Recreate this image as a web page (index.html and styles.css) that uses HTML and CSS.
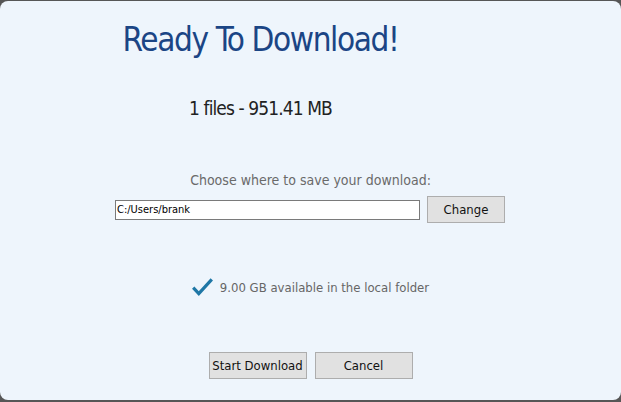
FILE: index.html
```html
<!DOCTYPE html>
<html>
<head>
<meta charset="utf-8">
<link rel="stylesheet" href="styles.css">
</head>
<body>
<div class="panel">
  <div class="header">
    <h1 class="title">Ready To Download!</h1>
    <div class="summary">1 files - 951.41 MB</div>
  </div>
  <div class="label">Choose where to save your download:</div>
  <div class="path-row">
    <input class="path" type="text" value="C:/Users/brank">
    <button class="btn change">Change</button>
  </div>
  <div class="space">
    <svg class="check" width="21" height="18" viewBox="0 0 21 18"><path d="M1.2 9.6 L6.8 15.6 L19.8 1.4" fill="none" stroke="#1f77a6" stroke-width="3.2" stroke-linecap="butt" stroke-linejoin="miter"/></svg>
    <span>9.00 GB available in the local folder</span>
  </div>
  <div class="actions">
    <button class="btn action">Start Download</button>
    <button class="btn action">Cancel</button>
  </div>
</div>
</body>
</html>
```
FILE: styles.css
```css
html, body {
  margin: 0;
  padding: 0;
  width: 621px;
  height: 402px;
  overflow: hidden;
  background: #565656;
}
body {
  padding-top: 1px;
  box-sizing: border-box;
  font-family: "DejaVu Sans Condensed", "DejaVu Sans", sans-serif;
}
.panel {
  height: 399px;
  background: #eef5fc;
  border-radius: 8px;
  display: flex;
  flex-direction: column;
  align-items: center;
}
.header {
  align-self: flex-start;
  width: 521px;
  text-align: center;
}
.title {
  margin: 19px 0 0;
  font-size: 33px;
  font-weight: normal;
  line-height: 40px;
  letter-spacing: -1.4px;
  color: #1b4585;
}
.summary {
  margin-top: 36px;
  font-size: 19px;
  line-height: 24px;
  letter-spacing: -0.9px;
  color: #222;
}
.label {
  margin-top: 51px;
  font-size: 14px;
  line-height: 18px;
  color: #6a6a6a;
}
.path-row {
  margin-top: 7px;
  display: flex;
  align-items: center;
  gap: 7px;
  margin-left: -1px;
}
.path {
  width: 305px;
  height: 20px;
  box-sizing: border-box;
  border: 1px solid #7a7a7a;
  background: #fff;
  padding: 0 1px;
  font-family: inherit;
  font-size: 11px;
  color: #000;
  outline: none;
  margin: 0;
}
.btn {
  box-sizing: border-box;
  height: 27px;
  background: #e1e1e1;
  border: 1px solid #adadad;
  border-radius: 0;
  font-family: inherit;
  font-size: 13px;
  color: #111;
  padding: 0;
  margin: 0;
}
.change {
  width: 78px;
}
.space {
  margin-top: 55px;
  display: flex;
  align-items: center;
  gap: 7px;
  font-size: 13px;
  color: #666;
}
.check {
  display: block;
}
.actions {
  margin-top: 56px;
  display: flex;
  gap: 8px;
}
.action {
  width: 98px;
}
```
